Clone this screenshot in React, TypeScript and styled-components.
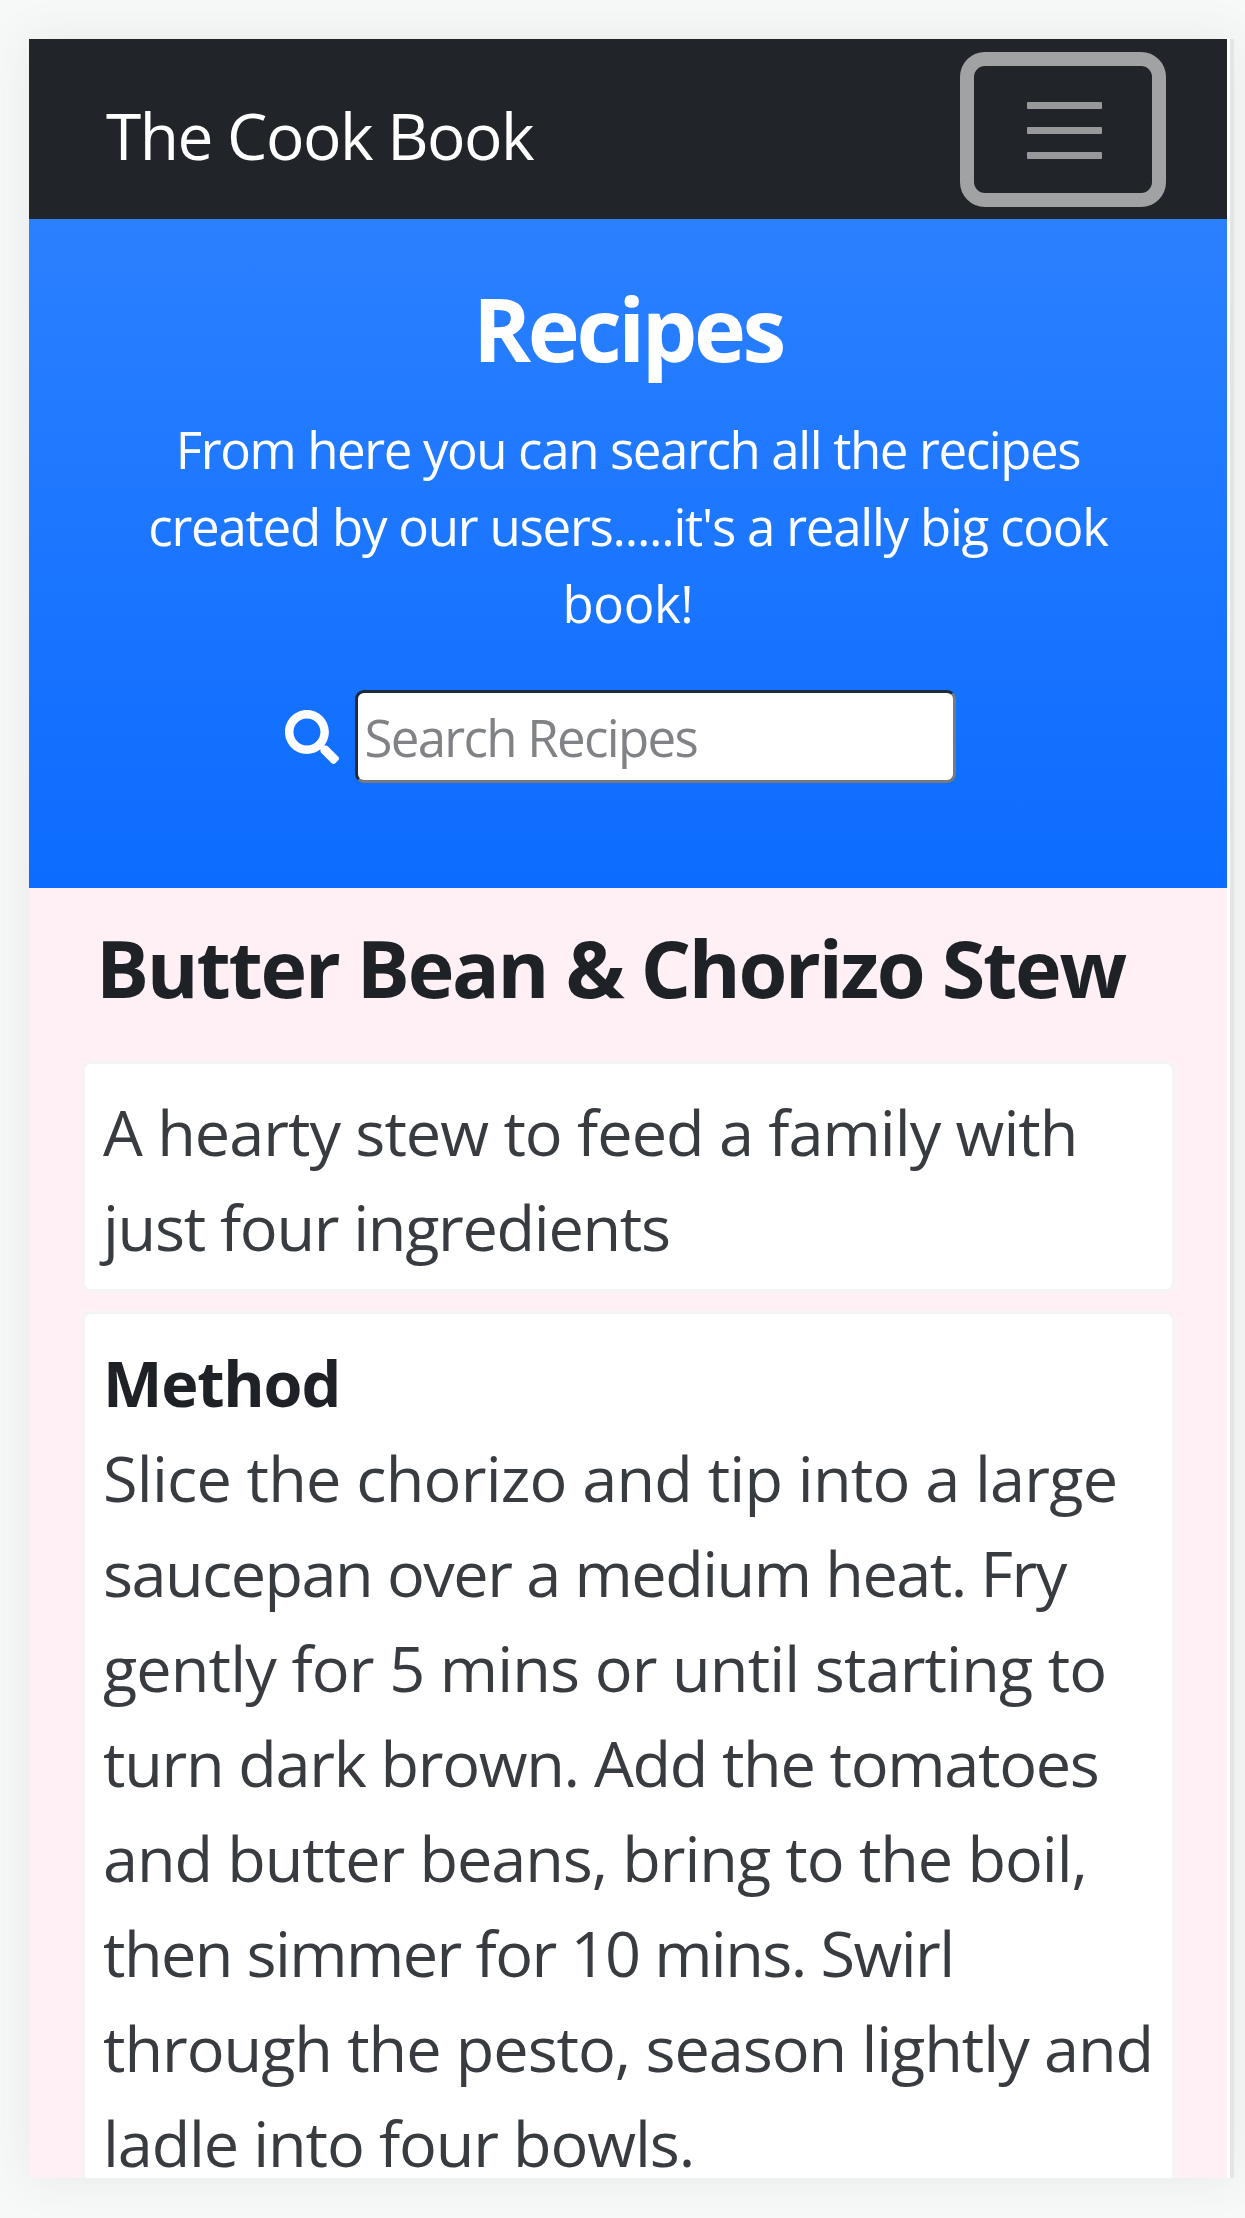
import React from "react";
import styled, { createGlobalStyle } from "styled-components";
import { FaSearch } from "react-icons/fa";

const GlobalStyle = createGlobalStyle`
  *, *::before, *::after { box-sizing: border-box; }
  html, body { margin: 0; padding: 0; }
  body {
    background: #f7f9f8;
    color: #1e2226;
    font-family: "Open Sans", "Noto Sans", sans-serif;
    overflow: hidden;
  }
  h1, h2, h3, p { margin: 0; }
`;

const Page = styled.div`
  height: 2218px;
  padding: 39px 0 0 29px;
  overflow: hidden;
`;

const Device = styled.main`
  display: flex;
  width: 1205px;
  height: 2139px;
  background: #fff;
  border-right: 4px solid #e3e4e4;
  box-shadow: 0 0 44px rgba(60, 75, 70, 0.085);
`;

const Screen = styled.div`
  display: flex;
  flex-direction: column;
  width: 1198px;
  height: 100%;
  overflow: hidden;
  background: #fff0f5;
`;

const Navbar = styled.nav`
  display: flex;
  flex: none;
  align-items: center;
  justify-content: space-between;
  height: 180px;
  padding: 0 61px 0 77px;
  background: #212529;
`;

const Brand = styled.a`
  padding-top: 13px;
  color: #fff;
  font-size: 64px;
  line-height: 96px;
  white-space: nowrap;
`;

const Toggler = styled.button`
  display: flex;
  flex-direction: column;
  align-items: center;
  justify-content: center;
  gap: 18px;
  width: 206px;
  height: 155px;
  padding: 3px 0 0 2px;
  background: transparent;
  border: 14px solid #a1a2a3;
  border-radius: 25px;
`;

const TogglerBar = styled.span`
  width: 75px;
  height: 7px;
  border-radius: 1px;
  background: #97989a;
`;

const Hero = styled.header`
  display: flex;
  flex: none;
  flex-direction: column;
  align-items: center;
  height: 669px;
  padding-top: 51px;
  color: #fff;
  background: linear-gradient(180deg, #2b80ff, #0c6cff);
`;

const HeroTitle = styled.h1`
  font-size: 88px;
  font-weight: 700;
  line-height: 116px;
`;

const HeroText = styled.p`
  margin-top: 25px;
  font-size: 51px;
  line-height: 76.8px;
  text-align: center;
`;

const Line = styled.span<{ $spacing?: number }>`
  display: block;
  white-space: nowrap;
  letter-spacing: ${({ $spacing = 0 }) => $spacing}px;
`;

const SearchForm = styled.form`
  display: flex;
  align-items: center;
  gap: 16px;
  margin: 49px 16px 0 0;
  svg { width: 54px; height: 54px; }
`;

const SearchInput = styled.input`
  width: 601px;
  height: 93px;
  padding: 1px 7px 0;
  font: inherit;
  font-size: 51px;
  letter-spacing: -1.7px;
  background: #fff;
  border: 3px solid;
  border-color: #1e2b3c #77797c #77797c #1e2b3c;
  border-radius: 9px;
  &::placeholder { color: #808285; opacity: 1; }
`;

const Content = styled.section`
  display: flex;
  flex-direction: column;
  padding: 20px 52px 0 53px;
`;

const RecipeTitle = styled.h2`
  padding-left: 14px;
  font-size: 79px;
  line-height: 120px;
  white-space: nowrap;
`;

const Cards = styled.div`
  display: flex;
  flex-direction: column;
  gap: 19px;
  margin-top: 33px;
`;

const Card = styled.article<{ $leading: number }>`
  flex: none;
  padding: 21px 18px 14px;
  color: #383c40;
  font-size: 63px;
  line-height: ${({ $leading }) => $leading}px;
  background: #fff;
  border: 3px solid #f3f4f4;
  border-radius: 9px;
`;

const CardTitle = styled.h3`
  color: #1e2226;
  font-size: 63px;
`;

type TextLine = [text: string, spacing: number];

const intro: TextLine[] = [
  ["From here you can search all the recipes", -1.38],
  ["created by our users.....it's a really big cook", -1.23],
  ["book!", -0.4],
];

const summary: TextLine[] = [
  ["A hearty stew to feed a family with", -1],
  ["just four ingredients", -1.3],
];

const method: TextLine[] = [
  ["Slice the chorizo and tip into a large", -0.78],
  ["saucepan over a medium heat. Fry", -1.53],
  ["gently for 5 mins or until starting to", -0.87],
  ["turn dark brown. Add the tomatoes", -1.31],
  ["and butter beans, bring to the boil,", -1.06],
  ["then simmer for 10 mins. Swirl", -1.58],
  ["through the pesto, season lightly and", -1.05],
  ["ladle into four bowls.", -1.13],
];

const Lines = ({ lines }: { lines: TextLine[] }) => (
  <>
    {lines.map(([text, spacing]) => (
      <Line key={text} $spacing={spacing}>{text}</Line>
    ))}
  </>
);

export default function App() {
  return (
    <Page>
      <GlobalStyle />
      <Device>
        <Screen>
          <Navbar>
            <Brand><Line $spacing={-1.5}>The Cook Book</Line></Brand>
            <Toggler aria-label="Toggle navigation">
              <TogglerBar />
              <TogglerBar />
              <TogglerBar />
            </Toggler>
          </Navbar>
          <Hero>
            <HeroTitle><Line $spacing={-3.4}>Recipes</Line></HeroTitle>
            <HeroText><Lines lines={intro} /></HeroText>
            <SearchForm>
              <FaSearch />
              <SearchInput placeholder="Search Recipes" />
            </SearchForm>
          </Hero>
          <Content>
            <RecipeTitle><Line $spacing={-2.26}>Butter Bean &amp; Chorizo Stew</Line></RecipeTitle>
            <Cards>
              <Card $leading={94.8}><p><Lines lines={summary} /></p></Card>
              <Card $leading={95}>
                <CardTitle><Line $spacing={-1.2}>Method</Line></CardTitle>
                <p><Lines lines={method} /></p>
              </Card>
            </Cards>
          </Content>
        </Screen>
      </Device>
    </Page>
  );
}
